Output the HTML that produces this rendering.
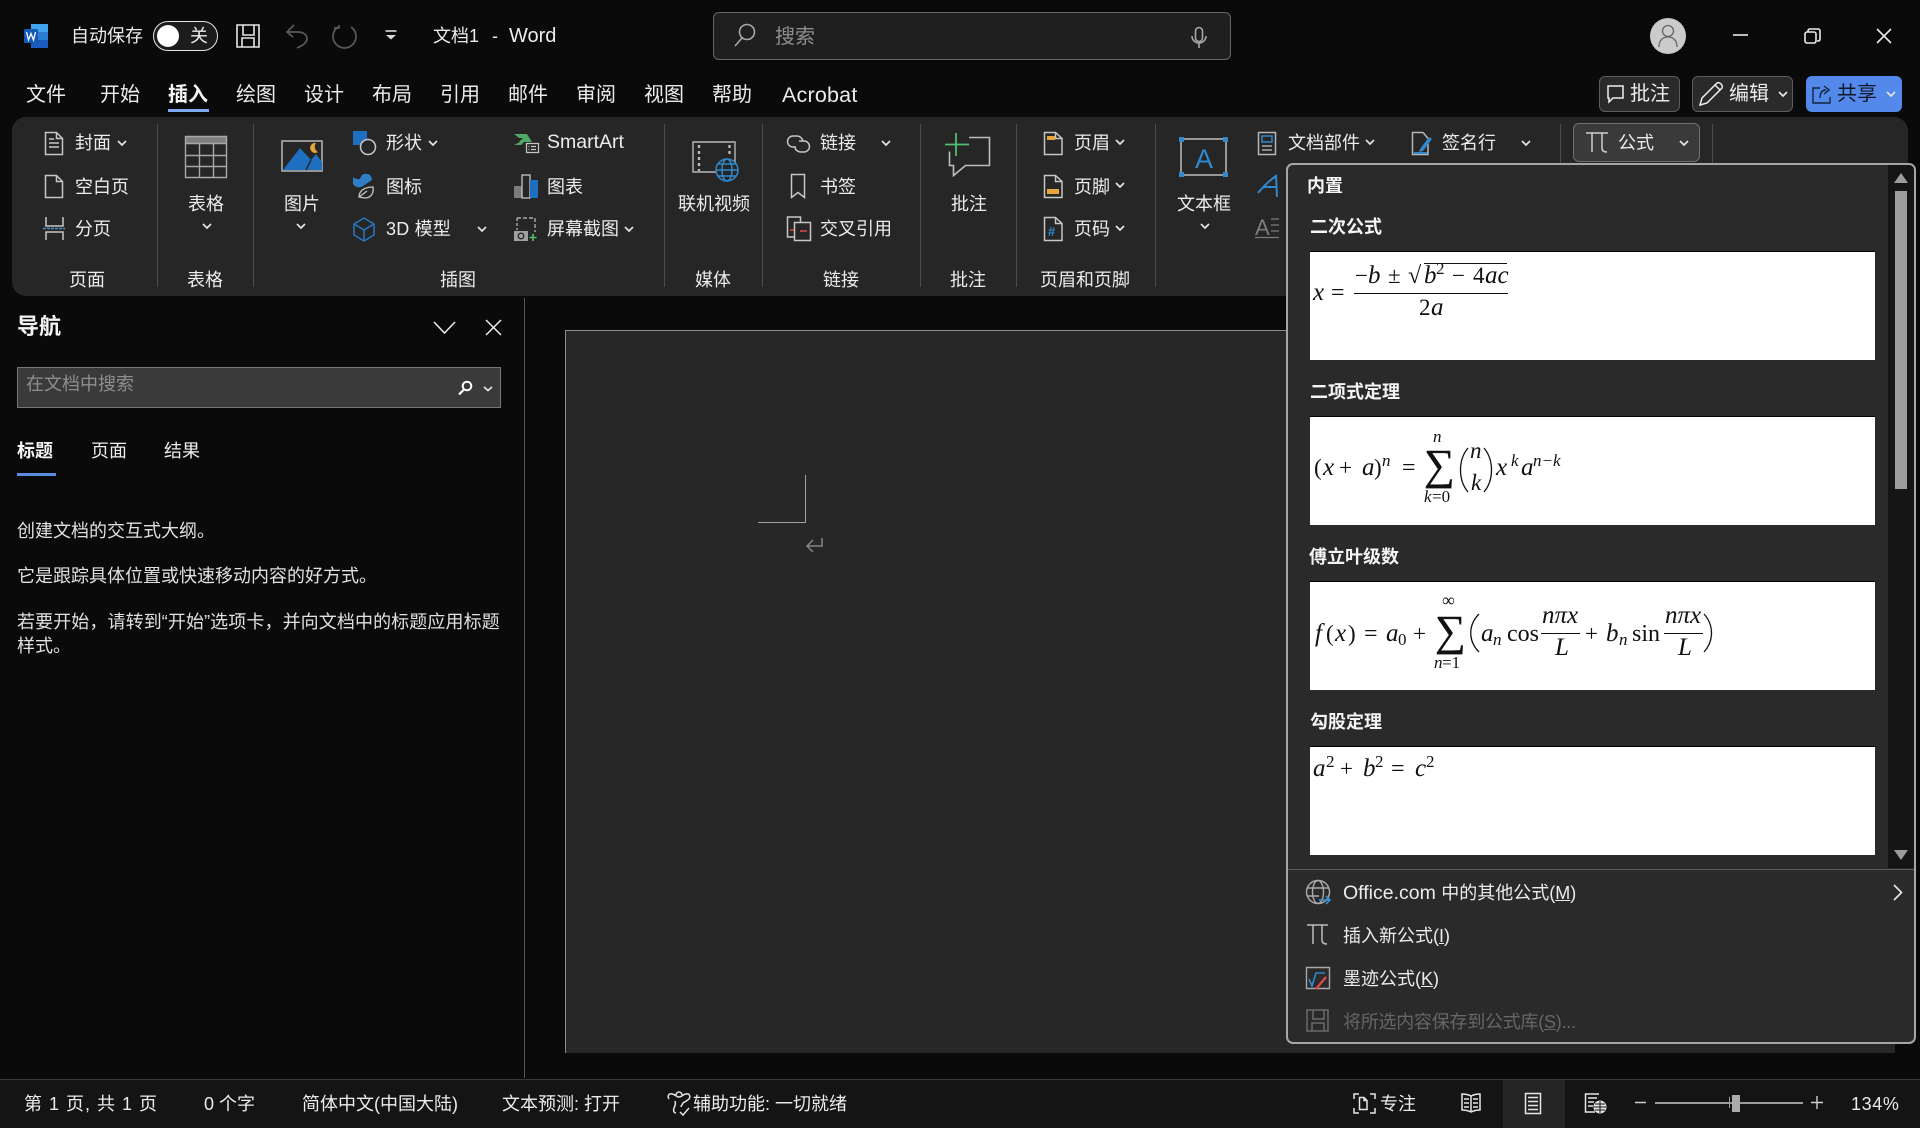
<!DOCTYPE html>
<html lang="zh-CN"><head><meta charset="utf-8"><title>文档1 - Word</title>
<style>
html,body{margin:0;padding:0;width:1920px;height:1128px;overflow:hidden;background:#0a0a0a}
body{position:relative;font-family:"Liberation Sans","Noto Sans CJK SC",sans-serif;color:#ececec}
.b{position:absolute;box-sizing:border-box}
.t{position:absolute;white-space:nowrap;font-size:18px;line-height:24px;height:24px;color:#ececec}
.tb{font-size:20px}
.bd{font-weight:700;color:#f4f4f4}
.d{position:absolute;top:124px;height:163px;width:1px;background:#4c4c4c}
svg{position:absolute;left:0;top:0}
svg text{font-family:"Liberation Serif",serif;fill:#111}
svg .i{font-style:italic;font-size:25px}
svg .s{font-size:17px}
svg .si{font-size:17px;font-style:italic}
</style></head><body>
<!-- structure -->
<div class="b" style="left:12px;top:117px;width:1896px;height:179px;background:#262626;border-radius:14px"></div>
<div class="d" style="left:157px"></div><div class="d" style="left:253px"></div><div class="d" style="left:664px"></div><div class="d" style="left:762px"></div><div class="d" style="left:920px"></div><div class="d" style="left:1016px"></div><div class="d" style="left:1155px"></div>
<div class="d" style="left:1560px;height:40px"></div><div class="d" style="left:1712px;height:40px"></div>
<div class="b" style="left:524px;top:298px;width:1px;height:780px;background:#555"></div>
<div class="b" style="left:565px;top:330px;width:1330px;height:723px;background:#272727;border:1px solid #8c8c8c;border-right:0;border-bottom:0"></div>
<div class="b" style="left:758px;top:522px;width:48px;height:1px;background:#a0a0a0"></div>
<div class="b" style="left:805px;top:475px;width:1px;height:48px;background:#a0a0a0"></div>
<div class="b" style="left:0;top:1079px;width:1920px;height:49px;background:#141414;border-top:1px solid #3a3a3a"></div>
<div class="b" style="left:1503px;top:1080px;width:62px;height:48px;background:#252525"></div>

<!-- title bar -->
<div class="t" style="left:71px;top:24px">自动保存</div>
<div class="b" style="left:153px;top:21px;width:65px;height:30px;border:1.5px solid #e4e4e4;border-radius:15px;background:#1c1c1c"></div>
<div class="b" style="left:157px;top:25px;width:22px;height:22px;border-radius:50%;background:#fff"></div>
<div class="t" style="left:190px;top:24px">关</div>
<div class="t" style="left:433px;top:24px">文档1</div>
<div class="t" style="left:492px;top:24px">-</div>
<div class="t tb" style="left:509px;top:24px">Word</div>
<div class="b" style="left:713px;top:12px;width:518px;height:48px;background:#1f1f1f;border:1px solid #666;border-radius:6px"></div>
<div class="t tb" style="left:775px;top:25px;color:#8e8e8e">搜索</div>

<!-- tabs -->
<div class="t tb" style="left:26px;top:83px">文件</div>
<div class="t tb" style="left:100px;top:83px">开始</div>
<div class="t tb bd" style="left:168px;top:83px">插入</div>
<div class="b" style="left:168px;top:109px;width:41px;height:3px;background:#7fa9ee"></div>
<div class="t tb" style="left:236px;top:83px">绘图</div>
<div class="t tb" style="left:304px;top:83px">设计</div>
<div class="t tb" style="left:372px;top:83px">布局</div>
<div class="t tb" style="left:440px;top:83px">引用</div>
<div class="t tb" style="left:508px;top:83px">邮件</div>
<div class="t tb" style="left:576px;top:83px">审阅</div>
<div class="t tb" style="left:644px;top:83px">视图</div>
<div class="t tb" style="left:712px;top:83px">帮助</div>
<div class="t" style="left:782px;top:83px;font-size:21.5px;letter-spacing:.2px">Acrobat</div>

<div class="b" style="left:1599px;top:76px;width:81px;height:36px;background:#2a2a2a;border:1px solid #5c5c5c;border-radius:6px"></div>
<div class="t tb" style="left:1630px;top:82px">批注</div>
<div class="b" style="left:1692px;top:76px;width:101px;height:36px;background:#2a2a2a;border:1px solid #5c5c5c;border-radius:6px"></div>
<div class="t tb" style="left:1729px;top:82px">编辑</div>
<div class="b" style="left:1806px;top:76px;width:96px;height:36px;background:#5389ea;border-radius:6px"></div>
<div class="t tb" style="left:1837px;top:82px;color:#101828">共享</div>

<!-- ribbon text -->
<div class="t" style="left:75px;top:131px">封面</div>
<div class="t" style="left:75px;top:175px">空白页</div>
<div class="t" style="left:75px;top:217px">分页</div>
<div class="t" style="left:188px;top:192px">表格</div>
<div class="t" style="left:284px;top:192px">图片</div>
<div class="t" style="left:386px;top:131px">形状</div>
<div class="t" style="left:386px;top:175px">图标</div>
<div class="t" style="left:386px;top:217px;letter-spacing:.2px">3D 模型</div>
<div class="t" style="left:547px;top:130px;font-size:19.5px">SmartArt</div>
<div class="t" style="left:547px;top:175px">图表</div>
<div class="t" style="left:547px;top:217px">屏幕截图</div>
<div class="t" style="left:678px;top:192px">联机视频</div>
<div class="t" style="left:820px;top:131px">链接</div>
<div class="t" style="left:820px;top:175px">书签</div>
<div class="t" style="left:820px;top:217px">交叉引用</div>
<div class="t" style="left:951px;top:192px">批注</div>
<div class="t" style="left:1074px;top:131px">页眉</div>
<div class="t" style="left:1074px;top:175px">页脚</div>
<div class="t" style="left:1074px;top:217px">页码</div>
<div class="t" style="left:1177px;top:192px">文本框</div>
<div class="t" style="left:1288px;top:131px">文档部件</div>
<div class="t" style="left:1442px;top:131px">签名行</div>
<div class="b" style="left:1573px;top:123px;width:127px;height:39px;background:#3a3a3a;border:1px solid #707070;border-radius:6px"></div>
<div class="t" style="left:1618px;top:131px">公式</div>
<div class="t" style="left:69px;top:268px">页面</div>
<div class="t" style="left:187px;top:268px">表格</div>
<div class="t" style="left:440px;top:268px">插图</div>
<div class="t" style="left:695px;top:268px">媒体</div>
<div class="t" style="left:823px;top:268px">链接</div>
<div class="t" style="left:950px;top:268px">批注</div>
<div class="t" style="left:1040px;top:268px">页眉和页脚</div>

<!-- nav pane -->
<div class="t bd" style="left:17px;top:315px;font-size:22px">导航</div>
<div class="b" style="left:17px;top:367px;width:484px;height:41px;background:#3a3a3a;border:1px solid #777"></div>
<div class="t" style="left:26px;top:372px;color:#8e8e8e">在文档中搜索</div>
<div class="t bd" style="left:17px;top:439px">标题</div>
<div class="b" style="left:17px;top:473px;width:39px;height:3px;background:#5b8ce0"></div>
<div class="t" style="left:91px;top:439px">页面</div>
<div class="t" style="left:164px;top:439px">结果</div>
<div class="t" style="left:17px;top:519px;color:#e0e0e0">创建文档的交互式大纲。</div>
<div class="t" style="left:17px;top:564px;color:#e0e0e0">它是跟踪具体位置或快速移动内容的好方式。</div>
<div class="t" style="left:17px;top:610px;color:#e0e0e0;letter-spacing:.1px">若要开始，请转到“开始”选项卡，并向文档中的标题应用标题</div>
<div class="t" style="left:17px;top:634px;color:#e0e0e0">样式。</div>

<!-- status -->
<div class="t" style="left:24px;top:1092px;letter-spacing:1px">第 1 页, 共 1 页</div>
<div class="t" style="left:204px;top:1092px">0 个字</div>
<div class="t" style="left:302px;top:1092px">简体中文(中国大陆)</div>
<div class="t" style="left:502px;top:1092px">文本预测: 打开</div>
<div class="t" style="left:693px;top:1092px">辅助功能: 一切就绪</div>
<div class="t" style="left:1380px;top:1092px">专注</div>
<div class="t" style="left:1851px;top:1092px;letter-spacing:.6px">134%</div>

<!-- popup -->
<div class="b" style="left:1286px;top:163px;width:630px;height:881px;background:#2a2a2a;border:2px solid #a6a6a6;border-radius:7px"></div>
<div class="b" style="left:1888px;top:165px;width:26px;height:703px;background:#151515;border-top-right-radius:5px"></div>
<div class="b" style="left:1895px;top:191px;width:12px;height:298px;background:#9c9c9c"></div>
<div class="b" style="left:1288px;top:869px;width:626px;height:1px;background:#5c5c5c"></div>
<div class="t bd" style="left:1307px;top:174px">内置</div>
<div class="t bd" style="left:1310px;top:215px">二次公式</div>
<div class="t bd" style="left:1310px;top:380px">二项式定理</div>
<div class="t bd" style="left:1309px;top:545px">傅立叶级数</div>
<div class="t bd" style="left:1310px;top:710px">勾股定理</div>
<div class="b" style="left:1310px;top:251px;width:565px;height:109px;background:#fff;border-top:1px solid #000"></div>
<div class="b" style="left:1310px;top:416px;width:565px;height:109px;background:#fff;border-top:1px solid #000"></div>
<div class="b" style="left:1310px;top:581px;width:565px;height:109px;background:#fff;border-top:1px solid #000"></div>
<div class="b" style="left:1310px;top:746px;width:565px;height:109px;background:#fff;border-top:1px solid #000"></div>
<div class="t" style="left:1343px;top:881px"><span style="font-size:19.5px">Office.com </span>中的其他公式(<u>M</u>)</div>
<div class="t" style="left:1343px;top:924px">插入新公式(<u>I</u>)</div>
<div class="t" style="left:1343px;top:967px">墨迹公式(<u>K</u>)</div>
<div class="t" style="left:1343px;top:1010px;color:#666;letter-spacing:-.25px">将所选内容保存到公式库(<u>S</u>)...</div>

<svg width="1920" height="1128" viewBox="0 0 1920 1128" fill="none">
<!-- Word logo -->
<rect x="31" y="24" width="17" height="8" fill="#41a5ee"/><rect x="31" y="32" width="17" height="8" fill="#2b7cd3"/><rect x="31" y="40" width="17" height="8" fill="#185abd"/>
<rect x="24" y="29" width="14" height="14" rx="1" fill="#1459b8"/><path d="M26.500 32l2 8 2.500-6.500 2.500 6.500 2-8" stroke="#fff" stroke-width="1.300"/>
<!-- QAT -->
<g stroke="#e6e6e6" stroke-width="1.600"><path d="M237 25h22v22h-22z"/><path d="M243 25v10h11v-10M242 47v-9h12v9"/></g>
<g stroke="#5a5a5a" stroke-width="1.700"><path d="M294 25l-7 7 6 5M287 32h10c7 0 10 3 10 7 0 3-3 6-10 9"/><path d="M351 27a11.500 11.500 0 1 1-13 0M339 25v3h-5"/></g>
<path d="M385.500 31h11" stroke="#ddd" stroke-width="1.600"/><path d="M386 35h10l-5 4.500z" fill="#ddd"/>
<g stroke="#a8a8a8" stroke-width="1.600"><circle cx="747" cy="32" r="7.500"/><path d="M742 38l-7 8"/><rect x="1195.500" y="27.500" width="7" height="14" rx="3.500"/><path d="M1192 36a7 7 0 0 0 14 0M1199 43v5"/></g>
<!-- avatar and controls -->
<circle cx="1668" cy="36" r="18" fill="#cbcbcb"/><circle cx="1668" cy="31" r="5.500" stroke="#666" stroke-width="1.300"/><path d="M1659 47c0-7 4-10 9-10s9 3 9 10" stroke="#666" stroke-width="1.300"/>
<g stroke="#eaeaea" stroke-width="1.600"><path d="M1733 35h15"/><rect x="1805" y="32" width="11" height="11" rx="2"/><path d="M1808 32v-1q0-2 2-2h8q2 0 2 2v8q0 2-2 2h-1"/><path d="M1877 29l14 14M1891 29l-14 14"/></g>
<!-- top-right buttons -->
<g stroke="#eee" stroke-width="1.500"><path d="M1608 86h15v12h-10l-4 4v-4h-1z"/><path d="M1700 105l2-7 15-15q2-1 4 1t1 4l-15 15zM1715 85l5 5"/></g>
<path d="M1820 88h-7v15h17v-6M1820 98q0-8 6-8M1824 86l5 4-5 4" stroke="#16233c" stroke-width="1.400"/>
<!-- chevrons -->
<path stroke="#e4e4e4" stroke-width="1.700" d="M118 141l4 4 4-4M429 141l4 4 4-4M478 227l4 4 4-4M625 227l4 4 4-4M203 224l4 4 4-4M297 224l4 4 4-4M882 141l4 4 4-4M1116 140l4 4 4-4M1116 183l4 4 4-4M1116 226l4 4 4-4M1201 224l4 4 4-4M1366 140l4 4 4-4M1522 141l4 4 4-4M1680 141l4 4 4-4M1779 92l4 4 4-4M1887 92l4 4 4-4M484 387l4 3.500 4-3.500"/>
<!-- pages group -->
<g stroke="#c6c6c6" stroke-width="1.500">
<path d="M45.500 132.500h11l6 6v16h-17zM56.500 132.500v6h6M49 139h5M49 143h10M49 147h10"/>
<path d="M45.500 175.500h11l6 6v16h-17zM56.500 175.500v6h6"/>
<path d="M46 217v9h17v-9M46 240v-8h17v8"/>
</g><path d="M43 228.500h22" stroke="#4a8fc8" stroke-width="1.500" stroke-dasharray="3 1"/>
<!-- table -->
<rect x="185" y="136" width="42" height="7" fill="#7e7e7e"/>
<path d="M185.500 136.500h41v41h-41zM199.500 143v34M213.500 143v34M186 143.500h40M186 155.500h40M186 166.500h40" stroke="#a8a8a8" stroke-width="1.400"/>
<!-- picture -->
<path d="M282 141h40v30h-40z" fill="#262626" stroke="#b8b8b8" stroke-width="1.500"/>
<path d="M283 170l17-22 11 12 5-6 6 8v8z" fill="#1f6fc1"/><path d="M311 160l-5 10" stroke="#262626" stroke-width="1.500"/>
<path d="M316 143a5 5 0 1 0 2 9 6 6 0 0 1-2-9z" fill="#e8a33d"/>
<!-- shapes -->
<rect x="353" y="131" width="14" height="14" fill="#1f6fc1"/><circle cx="368" cy="147" r="7.500" fill="#262626" stroke="#c6c6c6" stroke-width="1.500"/>
<path d="M353 177c2 2 4 2 7 2 1-4 4-6 7-5 3 0 5 3 5 6-3 2-6 4-9 6-3 2-7 2-10-2z" fill="#2e7fc8"/>
<path d="M359 197c0-6 5-10 14-10 1 6-2 11-8 11-3 0-5-1-6-1zM359 197l8-6" stroke="#c6c6c6" stroke-width="1.300"/>
<path d="M364 218l10 6v11l-10 6-10-6v-11zM354 224l10 6 10-6M364 230v11" stroke="#2778c4" stroke-width="1.500"/>
<!-- smartart etc -->
<path d="M514 134h13l5 8h-13l4-4h-4zM514 145l6-3h4l-3 3z" fill="#4fa866"/>
<path d="M526.500 143.500h12v9h-12zM531 146.500h5M531 149.500h5M528.500 146.500h1M528.500 149.500h1" stroke="#c6c6c6" stroke-width="1.200"/>
<rect x="514" y="186" width="8" height="12" fill="#7a7a7a"/><rect x="522" y="175" width="8" height="23" stroke="#c6c6c6" stroke-width="1.300"/><rect x="530" y="180" width="8" height="18" fill="#1f6fc1"/>
<path d="M517 218h18v14" stroke="#a8a8a8" stroke-width="1.400" stroke-dasharray="4 2"/><path d="M517 218v12" stroke="#a8a8a8" stroke-width="1.400" stroke-dasharray="3 2"/>
<rect x="514" y="231" width="14" height="10" fill="#a0a0a0"/><circle cx="521" cy="236" r="2.800" stroke="#262626" stroke-width="1.300"/><path d="M533 234v7M529.500 237.500h7" stroke="#4fc06f" stroke-width="1.600"/>
<!-- video -->
<path d="M717 172h-24v-30h42v24" stroke="#b8b8b8" stroke-width="1.400"/><path d="M699 145v26" stroke="#b8b8b8" stroke-width="2.400" stroke-dasharray="3 3"/><path d="M729.500 145v12" stroke="#b8b8b8" stroke-width="2.400" stroke-dasharray="3 3"/>
<g stroke="#3188cc" stroke-width="1.500"><circle cx="727" cy="170" r="11" fill="#262626"/><ellipse cx="727" cy="170" rx="5" ry="11"/><path d="M716 170h22M718 164h18M718 176h18"/></g>
<!-- links -->
<g stroke="#c6c6c6" stroke-width="1.500"><path d="M796 147h-3a5.500 5.500 0 1 1 0-11h4c3 0 5 2 6 5"/><path d="M799 141h5a5.500 5.500 0 1 1 0 11h-3c-3 0-6-2-6-5"/>
<path d="M791.500 174.500h13v23l-6.500-5-6.500 5z"/><path d="M794 237h-6.500v-20h13v5"/><path d="M794.500 222.500h16v18h-16z"/></g>
<path d="M790 230h4M800 231h7" stroke="#e0464c" stroke-width="1.500"/>
<!-- comment -->
<path d="M969 137.500h20.500v28h-24l-12 10v-10h-4v-14" stroke="#bdbdbd" stroke-width="1.600"/><path d="M956 133v23M945 144.500h24" stroke="#4fc06f" stroke-width="1.800"/>
<!-- header footer -->
<g stroke="#c6c6c6" stroke-width="1.500"><path d="M1044.500 132.500h11l6.500 6v16h-17.500zM1055.500 132.500v6h6.500"/><path d="M1044.500 175.500h11l6.500 6v16h-17.500zM1055.500 175.500v6h6.500"/><path d="M1044.500 217.500h11l6.500 6v17h-17.500zM1055.500 217.500v6h6.500"/></g>
<rect x="1047" y="136" width="8" height="4" fill="#e8a33d"/><rect x="1047" y="189" width="12" height="5" fill="#e8a33d"/>
<text x="1048" y="236" font-size="13" font-weight="700" style="fill:#3188cc;font-family:'Liberation Sans',sans-serif">#</text>
<!-- textbox -->
<rect x="1181" y="139" width="45" height="36" stroke="#bdbdbd" stroke-width="1.500"/>
<path d="M1179 137h5v5h-5zM1223 137h5v5h-5zM1179 172h5v5h-5zM1223 172h5v5h-5z" fill="#3188cc"/>
<text x="1195" y="168" font-size="27" style="fill:#3188cc;font-family:'Liberation Sans',sans-serif">A</text>
<!-- doc parts -->
<rect x="1258.500" y="132.500" width="17" height="22" stroke="#b8b8b8" stroke-width="1.500"/><rect x="1262" y="136" width="10" height="6" stroke="#3188cc" stroke-width="1.500"/><path d="M1262 146h10M1262 150h10" stroke="#8a8a8a" stroke-width="2"/>
<path d="M1258 193c5-6 12-13 18-17l1 21M1263 187h14" stroke="#3188cc" stroke-width="2"/>
<text x="1255" y="235" font-size="22" style="fill:#7c7c7c;font-family:'Liberation Sans',sans-serif">A</text><path d="M1271 219h8M1271 225h8M1271 231h8" stroke="#7c7c7c" stroke-width="1.300"/><path d="M1255 237.500h24" stroke="#7c7c7c" stroke-width="1.300"/>
<!-- signature -->
<path d="M1423 132.500h-10.500v22h15.500v-14M1423 132.500l5 6" stroke="#b8b8b8" stroke-width="1.500"/><path d="M1420 149l9-12 3 2-9 12-4 1z" fill="#3188cc"/><path d="M1414 153h13" stroke="#3188cc" stroke-width="2"/>
<!-- pi -->
<path d="M1586 133h22M1592 133v19M1602 133v15q0 4 5 4" stroke="#cfcfcf" stroke-width="1.500"/>
<!-- nav -->
<path d="M434 322l10.500 11 10.500-11M486 320l15 15M501 320l-15 15" stroke="#eee" stroke-width="1.500"/>
<circle cx="467" cy="386" r="4.300" stroke="#fff" stroke-width="2"/><path d="M463.500 390l-4.500 4.500" stroke="#fff" stroke-width="2.200"/>
<path d="M822 538v8h-15M813 540l-6 6 6 6" stroke="#858585" stroke-width="1.500"/>
<!-- popup icons -->
<path d="M1901 173l7 10h-14z" fill="#9c9c9c"/><path d="M1894 850h14l-7 10z" fill="#9c9c9c"/>
<g stroke="#ababab" stroke-width="1.400"><circle cx="1318" cy="892" r="11.500"/><ellipse cx="1318" cy="892" rx="5.500" ry="11.500"/><path d="M1307 888h22M1307 896h12"/></g>
<path d="M1319 900h11M1326 896l4 4-4 4" stroke="#3a8fd0" stroke-width="1.600"/>
<path d="M1894 885l7.500 7.500-7.500 7.500" stroke="#e6e6e6" stroke-width="1.700"/>
<path d="M1307 925h21M1313 925v19M1322 925v15q0 4 5 4" stroke="#bdbdbd" stroke-width="1.500"/>
<path d="M1306.500 967.500h23v21h-23z" stroke="#a8a8a8" stroke-width="1.400"/><path d="M1309 979l3 7 4-13h9" stroke="#3188cc" stroke-width="1.600"/><path d="M1316 989l10-12" stroke="#e0464c" stroke-width="2.400"/>
<g stroke="#6a6a6a" stroke-width="1.500"><path d="M1307 1010h21v21h-21z"/><path d="M1313 1010v9h11v-9M1312 1031v-8h12v8"/></g>
<!-- status icons -->
<g stroke="#e4e4e4" stroke-width="1.500"><path d="M669 1099c-2-3 0-6 3-5 3 0 4 3 7 3s4-3 7-3c3-1 5 2 3 5-2 2-5 3-6 4-1 2-2 3-2 4M675 1101c1 3 0 5-1 7-1 3 0 5 2 5M676 1095a3 3 0 0 1 6 0M680 1112l3 3 6-7"/></g>
<g stroke="#e6e6e6" stroke-width="1.500"><path d="M1359 1094h-5v5M1370 1094h5v5M1359 1113h-5v-5M1370 1113h5v-5M1359.500 1097.500h4.500l3 3v9h-7.500zM1364 1097.500v3h3"/>
<path d="M1471 1096c-2-1-5-2-9-2v16c4 0 7 1 9 2 2-1 5-2 9-2v-16c-4 0-7 1-9 2zM1471 1096v16M1464 1099h5M1464 1103h5M1464 1107h5M1473 1099h5M1473 1103h5M1473 1107h5"/>
<path d="M1525.500 1093.500h15v20h-15zM1528 1097.500h10M1528 1101.500h10M1528 1105.500h10M1528 1109.500h10"/>
<path d="M1595 1112h-9.500v-18h13.500M1588 1098h9M1588 1102h6M1588 1106h5"/></g>
<circle cx="1600" cy="1107" r="6.500" fill="#e6e6e6"/><path d="M1594 1107h12M1600 1101v12M1595 1104h10M1595 1110h10" stroke="#141414" stroke-width="1"/>
<path d="M1635 1102.500h11M1811 1102.500h12M1817 1096v13" stroke="#cfcfcf" stroke-width="1.400"/><rect x="1655" y="1102" width="148" height="2" fill="#9c9c9c"/><path d="M1729.500 1097v11" stroke="#9c9c9c"/><rect x="1732" y="1095" width="8" height="17" fill="#ababab"/>

<!-- formula 1 -->
<text x="1313" y="300" class="i">x</text><text x="1331" y="300" font-size="24">=</text>
<path d="M1354 293.500h154M1424 263.500h83" stroke="#111" stroke-width="1.100"/>
<text x="1355" y="283" font-size="23">−</text><text x="1368" y="283" class="i">b</text><text x="1388" y="283" font-size="23">±</text><text x="1408" y="283" font-size="24">√</text>
<text x="1424" y="283" class="i">b</text><text x="1436" y="274" class="s">2</text><text x="1452" y="283" font-size="23">−</text><text x="1473" y="283" font-size="23">4</text><text x="1485" y="283" class="i">ac</text>
<text x="1419" y="315" font-size="23">2</text><text x="1431" y="315" class="i">a</text>
<!-- formula 2 -->
<text x="1314" y="475" font-size="23">(</text><text x="1323" y="475" class="i">x</text><text x="1339" y="475" font-size="23">+</text><text x="1362" y="475" class="i">a</text><text x="1374" y="475" font-size="23">)</text><text x="1382" y="466" class="si">n</text><text x="1402" y="475" font-size="24">=</text>
<text x="1424" y="479" font-size="43" stroke="#111" stroke-width=".4">∑</text>
<text x="1433" y="442" class="si">n</text><text x="1424" y="502" class="si">k</text><text x="1432" y="502" class="s">=0</text>
<path d="M1468 448c-10 12-10 32 0 44M1484 448c10 12 10 32 0 44" stroke="#111" stroke-width="1.300"/>
<text x="1470" y="458" class="i" style="font-size:23px">n</text><text x="1471" y="490" class="i" style="font-size:23px">k</text>
<text x="1496" y="475" class="i">x</text><text x="1511" y="466" class="si">k</text><text x="1521" y="475" class="i">a</text><text x="1533" y="466" class="si">n−k</text>
<!-- formula 3 -->
<text x="1315" y="641" class="i">f</text><text x="1326" y="641" font-size="23">(</text><text x="1335" y="641" class="i">x</text><text x="1348" y="641" font-size="23">)</text><text x="1364" y="641" font-size="24">=</text>
<text x="1386" y="641" class="i">a</text><text x="1398" y="645" class="s">0</text><text x="1413" y="641" font-size="23">+</text>
<text x="1435" y="645" font-size="43" stroke="#111" stroke-width=".4">∑</text>
<text x="1442" y="606" font-size="18">∞</text><text x="1434" y="668" class="si">n</text><text x="1442" y="668" class="s">=1</text>
<path d="M1479 614c-11 11-11 27 0 38M1704 614c10 11 10 27 0 38" stroke="#111" stroke-width="1.300"/>
<text x="1481" y="641" class="i">a</text><text x="1493" y="645" class="si">n</text><text x="1507" y="641" font-size="24">cos</text>
<path d="M1541 633.500h39M1664 633.500h39" stroke="#111" stroke-width="1.100"/>
<text x="1542" y="623" class="i">nπx</text><text x="1555" y="655" class="i">L</text>
<text x="1585" y="641" font-size="23">+</text><text x="1606" y="641" class="i">b</text><text x="1619" y="645" class="si">n</text><text x="1632" y="641" font-size="24">sin</text>
<text x="1665" y="623" class="i">nπx</text><text x="1678" y="655" class="i">L</text>
<!-- formula 4 -->
<text x="1313" y="776" class="i">a</text><text x="1326" y="767" class="s">2</text><text x="1340" y="776" font-size="23">+</text><text x="1363" y="776" class="i">b</text><text x="1375" y="767" class="s">2</text><text x="1391" y="776" font-size="24">=</text><text x="1415" y="776" class="i">c</text><text x="1426" y="767" class="s">2</text>
</svg>
</body></html>
